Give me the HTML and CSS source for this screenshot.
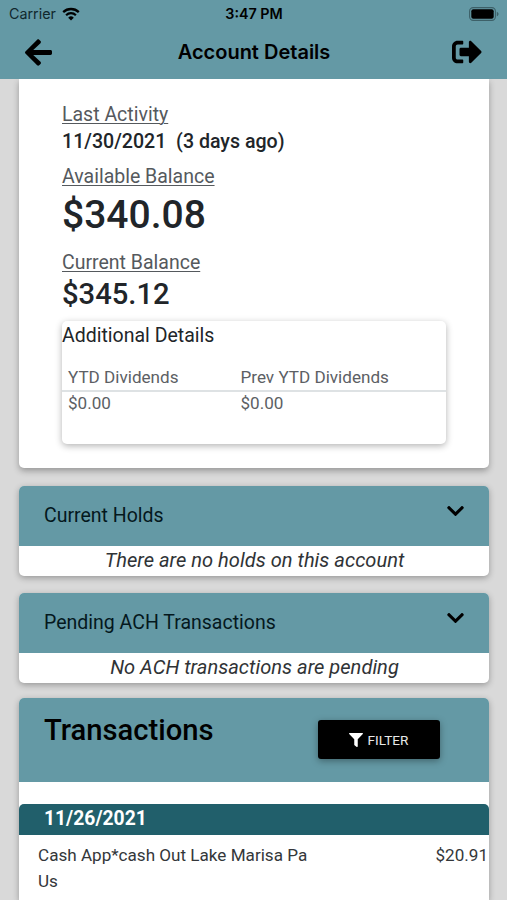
FILE: index.html
```
<!DOCTYPE html>
<html lang="en">
<head>
    <meta charset="UTF-8">
    <meta name="viewport" content="width=device-width, initial-scale=1.0">
    <title>Account Details</title>
    <link rel="stylesheet" href="styles.css">
</head>
<body>
    <header>
        <div class="status-bar">
            <div class="carrier">
                <span>Carrier</span>
                <svg class="wifi" viewBox="0 0 18 14">
                    <path d="M1.2 5.1a11.3 11.3 0 0 1 15.600 0" fill="none" stroke="#000" stroke-width="2.300"/>
                    <path d="M4.100 8.200a7 7 0 0 1 9.800 0" fill="none" stroke="#000" stroke-width="2.200"/>
                    <path d="M9 13.600L6.200 10.700a4 4 0 0 1 5.600 0z"/>
                </svg>
            </div>
            <div class="time">3:47 PM</div>
            <div class="battery-wrap">
                <svg class="battery" viewBox="0 0 30 14">
                    <rect x=".6" y=".6" width="25.800" height="12.800" rx="3.600" fill="none" stroke="#3d6068" stroke-width="1.100"/>
                    <rect x="2.300" y="2.300" width="22.400" height="9.400" rx="2"/>
                    <path d="M27.800 4.700c2.300.8 2.300 3.800 0 4.600z" fill="#3d6068"/>
                </svg>
            </div>
        </div>
        <div class="nav-bar">
            <svg class="icon-back" viewBox="0 0 448 512"><path d="M257.500 445.100l-22.200 22.200c-9.400 9.400-24.600 9.400-33.900 0L7 273c-9.400-9.400-9.400-24.600 0-33.900L201.400 44.700c9.400-9.400 24.600-9.400 33.900 0l22.200 22.200c9.500 9.500 9.300 25-.4 34.300L136.600 216H424c13.300 0 24 10.700 24 24v32c0 13.300-10.700 24-24 24H136.600l120.500 114.800c9.800 9.300 10 24.800.4 34.300z"/></svg>
            <h1>Account Details</h1>
            <svg class="icon-logout" viewBox="0 0 512 512"><path d="M497 273L329 441c-15 15-41 4.500-41-17v-96H152c-13.300 0-24-10.700-24-24v-96c0-13.300 10.700-24 24-24h136V88c0-21.400 25.900-32 41-17l168 168c9.300 9.400 9.300 24.600 0 34zM192 436v-40c0-6.600-5.400-12-12-12H96c-17.700 0-32-14.300-32-32V160c0-17.700 14.300-32 32-32h84c6.600 0 12-5.400 12-12V76c0-6.600-5.400-12-12-12H96c-53 0-96 43-96 96v192c0 53 43 96 96 96h84c6.600 0 12-5.400 12-12z"/></svg>
        </div>
    </header>

    <main>
        <!-- Account summary -->
        <section class="card summary">
            <div class="label">Last Activity</div>
            <div class="activity">11/30/2021&nbsp; (3 days ago)</div>
            <div class="label">Available Balance</div>
            <div class="available">$340.08</div>
            <div class="label">Current Balance</div>
            <div class="current">$345.12</div>
            <div class="details">
                <div class="details-title">Additional Details</div>
                <div class="details-row details-head">
                    <span>YTD Dividends</span>
                    <span>Prev YTD Dividends</span>
                </div>
                <div class="details-row">
                    <span>$0.00</span>
                    <span>$0.00</span>
                </div>
            </div>
        </section>

        <!-- Holds -->
        <section class="card panel">
            <div class="panel-header">
                <span>Current Holds</span>
                <svg class="chevron" viewBox="0 0 448 512"><path d="M207.029 381.476L12.686 187.132c-9.373-9.373-9.373-24.569 0-33.941l22.667-22.667c9.357-9.357 24.522-9.375 33.901-.04L224 284.505l154.745-154.021c9.379-9.335 24.544-9.317 33.901.04l22.667 22.667c9.373 9.373 9.373 24.569 0 33.941L240.971 381.476c-9.373 9.372-24.569 9.372-33.942 0z"/></svg>
            </div>
            <div class="panel-empty">There are no holds on this account</div>
        </section>

        <!-- Pending ACH -->
        <section class="card panel">
            <div class="panel-header">
                <span>Pending ACH Transactions</span>
                <svg class="chevron" viewBox="0 0 448 512"><path d="M207.029 381.476L12.686 187.132c-9.373-9.373-9.373-24.569 0-33.941l22.667-22.667c9.357-9.357 24.522-9.375 33.901-.04L224 284.505l154.745-154.021c9.379-9.335 24.544-9.317 33.901.04l22.667 22.667c9.373 9.373 9.373 24.569 0 33.941L240.971 381.476c-9.373 9.372-24.569 9.372-33.942 0z"/></svg>
            </div>
            <div class="panel-empty">No ACH transactions are pending</div>
        </section>

        <!-- Transactions -->
        <section class="card transactions">
            <div class="transactions-header">
                <h2>Transactions</h2>
                <button class="filter-button">
                    <svg class="icon-filter" viewBox="0 0 512 512"><path d="M487.976 0H24.028C2.710 0-8.047 25.866 7.058 40.971L192 225.941V432c0 7.831 3.821 15.170 10.237 19.662l80 55.980C298.020 518.690 320 507.493 320 487.980V225.941l184.947-184.970C520.021 25.896 509.338 0 487.976 0z"/></svg>
                    <span>FILTER</span>
                </button>
            </div>
            <div class="date-row">11/26/2021</div>
            <div class="transaction">
                <span class="description">Cash App*cash Out Lake Marisa Pa Us</span>
                <span class="amount">$20.91</span>
            </div>
        </section>
    </main>
</body>
</html>
```

FILE: styles.css
```
/* General styles */
* {
    box-sizing: border-box;
}

body {
    display: flex;
    flex-direction: column;
    font-family: Roboto, sans-serif;
    margin: 0;
    height: 100vh;
    overflow: hidden;
    background-color: #d9d9d9;
    color: #212529;
}

svg {
    display: block;
}

/* Header */
header {
    flex: none;
    height: 79px;
    background-color: #6499a5;
    color: #000;
    font-family: Inter, sans-serif;
}

.status-bar {
    display: grid;
    grid-template-columns: 1fr auto 1fr;
    align-items: center;
    height: 27px;
    padding: 0 8px 0 9px;
}

.carrier {
    display: flex;
    align-items: center;
    gap: 6px;
    color: #10282d;
    font-size: 14.3px;
}

.wifi {
    width: 18px;
    height: 14px;
}

.time {
    font-weight: 600;
    font-size: 14.3px;
}

.battery-wrap {
    display: flex;
    justify-content: flex-end;
}

.battery {
    width: 30px;
    height: 14px;
}

.nav-bar {
    display: flex;
    align-items: center;
    justify-content: space-between;
    height: 50px;
    padding: 0 25px;
}

.nav-bar h1 {
    margin: 0 0 0 4px;
    font-size: 20px;
    font-weight: 600;
}

.icon-back {
    width: 27px;
    height: 31px;
}

.icon-logout {
    width: 30px;
    height: 30px;
}

/* Cards */
main {
    display: flex;
    flex: 1;
    flex-direction: column;
    padding: 0 18px 0 19px;
}

.card {
    flex: none;
    background: #fff;
    border-radius: 5px;
    box-shadow: 0 2px 6px rgba(0, 0, 0, 0.3);
}

.summary {
    height: 389px;
    margin-bottom: 18px;
    padding: 22px 43px 0;
    border-radius: 0 0 5px 5px;
    box-shadow: 0 3px 6px rgba(0, 0, 0, 0.3);
    clip-path: inset(0 -12px -12px);
}

.label {
    color: #55595d;
    font-size: 19.5px;
    line-height: 27px;
    text-decoration: underline;
    text-decoration-thickness: 1px;
    text-underline-offset: 2px;
}

.activity {
    margin-bottom: 8px;
    font-size: 19.6px;
    font-weight: 500;
    line-height: 27px;
}

.available {
    margin-bottom: 8px;
    font-size: 39px;
    font-weight: 500;
    line-height: 51px;
}

.current {
    font-size: 29.2px;
    font-weight: 500;
    line-height: 36px;
}

.details {
    height: 123px;
    margin-top: 9px;
    border-radius: 5px;
    box-shadow: 0 2px 7px rgba(0, 0, 0, 0.3);
}

.details-title {
    height: 44px;
    font-size: 19.5px;
    line-height: 29px;
}

.details-row {
    display: grid;
    grid-template-columns: 172.5px 1fr;
    padding: 0 6px;
    color: #5c6064;
    font-size: 17.1px;
    line-height: 23px;
}

.details-head {
    border-bottom: 2px solid #dee2e4;
    line-height: 25px;
}

/* Collapsible panels */
.panel {
    overflow: hidden;
    margin-bottom: 17px;
}

.panel-header {
    display: flex;
    justify-content: space-between;
    height: 60px;
    padding: 15px 25px 0 25px;
    background-color: #6499a5;
    color: #04181d;
    font-size: 19.5px;
    line-height: 30px;
}

.chevron {
    width: 17px;
    height: 20px;
}

.panel-empty {
    height: 30px;
    color: #303336;
    font-size: 20.1px;
    font-style: italic;
    line-height: 29px;
    padding-left: 1px;
    text-align: center;
}

/* Transactions */
.transactions {
    flex: 1;
    min-height: 0;
    margin-top: -2px;
    border-radius: 5px 5px 0 0;
}

.transactions-header {
    display: flex;
    justify-content: space-between;
    align-items: flex-start;
    height: 84px;
    margin-bottom: 22px;
    padding: 22px 49px 0 25px;
    border-radius: 5px 5px 0 0;
    background-color: #6499a5;
}

.transactions-header h2 {
    margin: -8px 0 0;
    color: #000;
    font-size: 29.2px;
    font-weight: 500;
    line-height: 37px;
}

.filter-button {
    display: flex;
    align-items: center;
    justify-content: center;
    gap: 5px;
    width: 122px;
    height: 39px;
    padding: 0 1px 0 0;
    border: none;
    border-radius: 3px;
    background: #000;
    box-shadow: 0 2px 7px rgba(0, 0, 0, 0.35);
    color: #e8e8e8;
    font-family: inherit;
    font-size: 13.6px;
    cursor: pointer;
}

.icon-filter {
    width: 14px;
    height: 14px;
    fill: #fff;
}

.date-row {
    height: 31px;
    padding-left: 25px;
    border-radius: 5px 5px 0 0;
    background-color: #215f6b;
    color: #fff;
    font-size: 19.3px;
    font-weight: 700;
    line-height: 30px;
}

.transaction {
    display: flex;
    justify-content: space-between;
    padding: 7px 1px 0 19px;
    color: #34373a;
    font-size: 17.1px;
    line-height: 26px;
}

.description {
    width: 290px;
}
```
